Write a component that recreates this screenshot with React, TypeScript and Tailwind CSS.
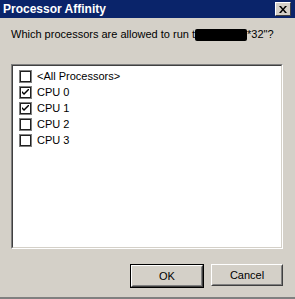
import React from 'react'

const font = { fontFamily: '"Liberation Sans", Arial, sans-serif' }

function CheckBox({ checked }: { checked: boolean }) {
  return (
    <span className="w-[13px] h-[13px] border border-[#808080] flex shrink-0">
      <span className="flex-1 border border-[#202020] bg-white flex items-center justify-center">
        {checked && (
          <svg width="7" height="7" viewBox="0 0 7 7">
            <path d="M0 2 L0 4 L2 6 L7 1 L7 -1 L2 4 Z" fill="#000" />
          </svg>
        )}
      </span>
    </span>
  )
}

function Button({ label, isDefault }: { label: string; isDefault?: boolean }) {
  return (
    <div className={isDefault ? 'border border-black' : ''}>
      <div className="w-[72px] h-[22px] bg-[#d4d0c8] border border-t-white border-l-white border-r-[#404040] border-b-[#404040] flex">
        <div className="flex-1 border border-t-[#d4d0c8] border-l-[#d4d0c8] border-r-[#808080] border-b-[#808080] flex items-center justify-center text-[11px] text-black">
          {label}
        </div>
      </div>
    </div>
  )
}

export default function App() {
  const items: [string, boolean][] = [
    ['<All Processors>', false],
    ['CPU 0', true],
    ['CPU 1', true],
    ['CPU 2', false],
    ['CPU 3', false],
  ]

  return (
    <div className="w-[295px] h-[299px] bg-[#d4d0c8] flex flex-col border-b-2 border-b-[#808080]" style={font}>
      {/* title bar */}
      <div className="h-[18px] bg-[#0a246a] flex items-center justify-between pl-[3px] pr-[4px]">
        <span className="text-white font-bold text-[12px] leading-none">Processor Affinity</span>
        <div className="w-[16px] h-[14px] bg-[#d4d0c8] border border-t-white border-l-white border-r-[#404040] border-b-[#404040] flex items-center justify-center">
          <svg width="8" height="7" viewBox="0 0 8 7">
            <path d="M0 0 H2 L4 2.5 L6 0 H8 L5 3.5 L8 7 H6 L4 4.5 L2 7 H0 L3 3.5 Z" fill="#000" />
          </svg>
        </div>
      </div>

      {/* question */}
      <div className="mt-[10px] ml-[11px] h-[13px] text-[11px] text-black flex items-center leading-none whitespace-nowrap">
        <span>Which processors are allowed to run t</span>
        <span className="w-[52px] h-[12px] bg-black rounded-[2px] shrink-0" />
        <span>*32"?</span>
      </div>

      {/* list box */}
      <div className="mt-[23px] ml-[11px] w-[272px] h-[185px] border border-t-[#808080] border-l-[#808080] border-r-white border-b-white flex">
        <div className="flex-1 bg-white border border-t-[#404040] border-l-[#404040] border-r-[#d4d0c8] border-b-[#d4d0c8] pt-[2px] pl-[6px] flex flex-col">
          {items.map(([label, checked]) => (
            <div key={label} className="h-[16px] flex items-center gap-[5px] text-[11px] text-black">
              <CheckBox checked={checked} />
              <span>{label}</span>
            </div>
          ))}
        </div>
      </div>

      {/* buttons */}
      <div className="mt-[15px] mr-[12px] flex justify-end gap-[7px]">
        <Button label="OK" isDefault />
        <Button label="Cancel" />
      </div>
    </div>
  )
}
